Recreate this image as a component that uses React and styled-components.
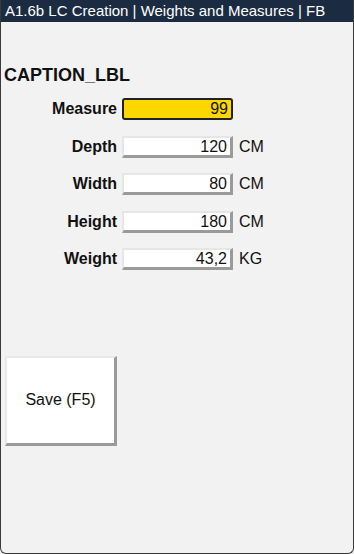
import React from 'react'
import styled, { createGlobalStyle } from 'styled-components'

const Global = createGlobalStyle`
  html, body { margin: 0; padding: 0; background: #f2f2f2; }
  body { font-family: "Liberation Sans", Arial, sans-serif; }
`

const Window = styled.div`
  width: 354px;
  height: 554px;
  box-sizing: border-box;
  display: flex;
  flex-direction: column;
  background: #f2f2f2;
  border-left: 1px solid #3a3a3a;
  border-right: 1px solid #3a3a3a;
  border-bottom: 1px solid #3a3a3a;
  border-radius: 0 0 6px 6px;
  overflow: hidden;
`

const TitleBar = styled.div`
  height: 22px;
  background: #1b2c42;
  color: #fff;
  font-size: 15px;
  line-height: 22px;
  padding-left: 4px;
  white-space: nowrap;
`

const Body = styled.div`
  display: flex;
  flex-direction: column;
  padding: 42px 0 0 3px;
`

const Caption = styled.div`
  font-weight: bold;
  font-size: 18px;
  line-height: 22px;
  color: #111;
  margin-bottom: 12px;
`

const Row = styled.div`
  display: flex;
  align-items: center;
  height: 22px;
  margin-bottom: 15.5px;
`

const Label = styled.div`
  width: 113px;
  text-align: right;
  font-weight: bold;
  font-size: 16px;
  color: #111;
  padding-right: 5px;
`

const Field = styled.div`
  box-sizing: border-box;
  width: 111px;
  height: 22px;
  font-size: 16px;
  text-align: right;
  line-height: 18px;
  padding-right: 3px;
  color: #111;
  background: ${p => (p.active ? '#ffd700' : '#fff')};
  border: ${p => (p.active ? '2px solid #222' : 'none')};
  border-radius: ${p => (p.active ? '3px' : '0')};
  ${p =>
    !p.active &&
    `
    border-top: 2px solid #e6e6e6;
    border-left: 2px solid #e6e6e6;
    border-right: 3px solid #9a9a9a;
    border-bottom: 3px solid #9a9a9a;
    line-height: 17px;
  `}
`

const Unit = styled.div`
  font-size: 16px;
  color: #111;
  margin-left: 6px;
`

const SaveButton = styled.div`
  box-sizing: border-box;
  margin: 70px 0 0 1px;
  width: 112px;
  height: 90px;
  background: #fff;
  border-top: 2px solid #e8e8e8;
  border-left: 2px solid #e8e8e8;
  border-right: 3px solid #9a9a9a;
  border-bottom: 3px solid #9a9a9a;
  display: flex;
  align-items: center;
  justify-content: center;
  font-size: 16px;
  color: #111;
`

const rows = [
  { label: 'Measure', value: '99', active: true },
  { label: 'Depth', value: '120', unit: 'CM' },
  { label: 'Width', value: '80', unit: 'CM' },
  { label: 'Height', value: '180', unit: 'CM' },
  { label: 'Weight', value: '43,2', unit: 'KG' },
]

export default function App() {
  return (
    <Window>
      <Global />
      <TitleBar>A1.6b LC Creation | Weights and Measures | FB</TitleBar>
      <Body>
        <Caption>CAPTION_LBL</Caption>
        {rows.map(r => (
          <Row key={r.label}>
            <Label>{r.label}</Label>
            <Field active={r.active}>{r.value}</Field>
            {r.unit && <Unit>{r.unit}</Unit>}
          </Row>
        ))}
        <SaveButton>Save (F5)</SaveButton>
      </Body>
    </Window>
  )
}
